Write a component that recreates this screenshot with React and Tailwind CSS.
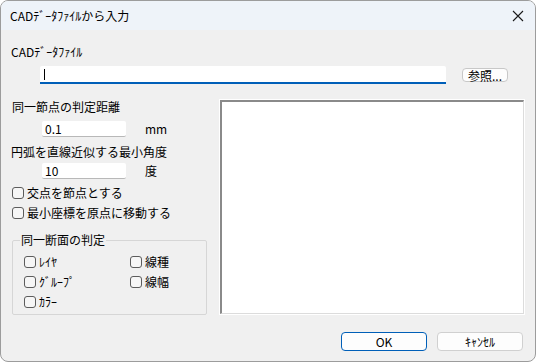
import React from 'react';

const font = { fontFamily: '"Noto Sans CJK JP", "Noto Sans", sans-serif' };

const CheckBox = ({ label, className = '' }) => (
  <label className={`flex items-center gap-[3px] h-[14px] leading-[14px] ${className}`}>
    <span className="w-[12px] h-[12px] rounded-[3px] border border-[#5c5c5c] bg-[#f6f6f6] shrink-0" />
    <span>{label}</span>
  </label>
);

const TextBox = ({ value }) => (
  <div className="w-[84px] h-[16px] bg-white border-b border-[#b8b8b8] rounded-[2px] pl-[3px] leading-[16px]">
    {value}
  </div>
);

export default function App() {
  return (
    <div
      className="w-[536px] h-[362px] flex flex-col bg-[#f0f0f0] border border-[#9c9c9c] rounded-[8px] overflow-hidden text-[12px] leading-[16px] text-black"
      style={font}
    >
      {/* Title bar */}
      <div className="h-[29px] shrink-0 flex items-center justify-between bg-[#eef3f9] pl-[9px] pr-[11px]">
        <span className="leading-[14px]">CADﾃﾞｰﾀﾌｧｲﾙから入力</span>
        <svg width="12" height="12" viewBox="0 0 12 12">
          <path d="M1 1 L11 11 M11 1 L1 11" stroke="#1a1a1a" strokeWidth="1.1" />
        </svg>
      </div>

      <div className="flex-1 flex flex-col pl-[10px] pr-[11px]">
        <div className="mt-[15px] leading-[14px]">CADﾃﾞｰﾀﾌｧｲﾙ</div>

        {/* File row */}
        <div className="mt-[7px] flex items-start">
          <div className="ml-[29px] w-[406px] h-[18px] bg-white border-b-2 border-[#005fb8] rounded-t-[2px] relative">
            <span className="absolute left-[4px] top-[3px] w-px h-[11px] bg-black" />
          </div>
          <button className="ml-[16px] mt-[2px] w-[46px] h-[14px] rounded-[4px] border border-[#c8c8c8] bg-[#fdfdfd] text-[12px] leading-[11px] flex items-center justify-center">
            参照...
          </button>
        </div>

        {/* Main */}
        <div className="mt-[16px] flex items-start">
          <div className="w-[209px] flex flex-col">
            <div className="leading-[14px] pl-[1px]">同一節点の判定距離</div>
            <div className="mt-[7px] flex items-center h-[16px]">
              <div className="ml-[31px]"><TextBox value="0.1" /></div>
              <span className="ml-[19px] leading-[16px]">mm</span>
            </div>
            <div className="mt-[8px] leading-[14px]">円弧を直線近似する最小角度</div>
            <div className="mt-[4px] flex items-center h-[16px]">
              <div className="ml-[31px]"><TextBox value="10" /></div>
              <span className="ml-[19px] leading-[16px]">度</span>
            </div>
            <CheckBox className="mt-[7px] ml-[1px]" label="交点を節点とする" />
            <CheckBox className="mt-[6px] ml-[1px]" label="最小座標を原点に移動する" />

            {/* Group */}
            <div className="mt-[20px] ml-[1px] w-[195px] h-[75px] border border-[#d6d6d6] rounded-[2px] relative">
              <span className="absolute left-[7px] top-[-8px] px-[1px] bg-[#f0f0f0] leading-[14px]">同一断面の判定</span>
              <div className="mt-[14px] ml-[11px] grid grid-cols-[106px_auto] gap-y-[6px]">
                <CheckBox label="ﾚｲﾔ" />
                <CheckBox label="線種" />
                <CheckBox label="ｸﾞﾙｰﾌﾟ" />
                <CheckBox label="線幅" />
                <CheckBox label="ｶﾗｰ" />
              </div>
            </div>
          </div>

          {/* Preview */}
          <div className="w-[304px] h-[214px] bg-white border-t-2 border-l-2 border-t-[#8a8a8a] border-l-[#8a8a8a] border-r border-b border-r-[#dcdcdc] border-b-[#dcdcdc] outline outline-1 outline-white" />
        </div>

        {/* Buttons */}
        <div className="mt-[17px] flex justify-end gap-[10px] pr-[1px]">
          <button className="w-[86px] h-[19px] rounded-[4px] border border-[#005fb8] bg-[#fdfdfd] text-[12px] leading-[14px]">
            OK
          </button>
          <button className="w-[86px] h-[19px] rounded-[4px] border border-[#d0d0d0] bg-[#fdfdfd] text-[12px] leading-[14px]">
            ｷｬﾝｾﾙ
          </button>
        </div>
      </div>
    </div>
  );
}
